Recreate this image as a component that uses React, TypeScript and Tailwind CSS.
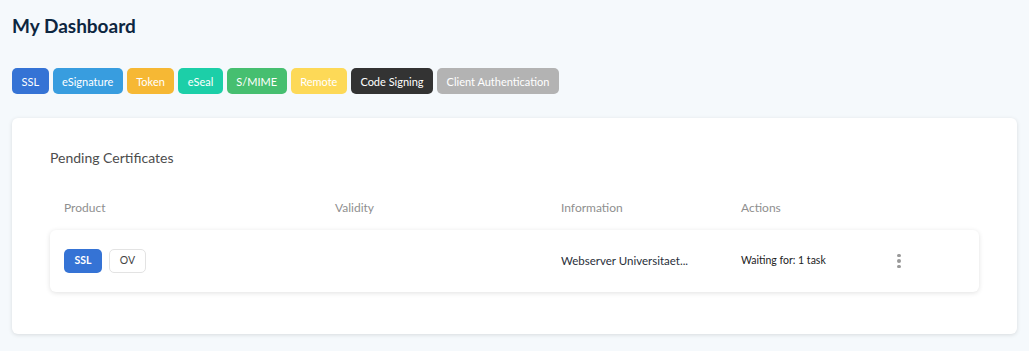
const TABS = [
  { label: 'SSL', cls: 'bg-[#3573d5] text-white' },
  { label: 'eSignature', cls: 'bg-[#389ddf] text-white' },
  { label: 'Token', cls: 'bg-[#f6b834] text-white' },
  { label: 'eSeal', cls: 'bg-[#1ccfa8] text-white' },
  { label: 'S/MIME', cls: 'bg-[#46bf70] text-white' },
  { label: 'Remote', cls: 'bg-[#fdd957] text-white' },
  { label: 'Code Signing', cls: 'bg-[#333333] text-white' },
  { label: 'Client Authentication', cls: 'bg-[#b3b3b3] text-white' },
];

const COLS = 'grid grid-cols-[271px_226px_180px_1fr] items-center';

export default function App() {
  return (
    <div className="min-h-[351px] bg-[#f5f9fc] px-3 pt-[12px] pb-[18px] font-['Lato','Noto_Sans',sans-serif]">
      <h1 className="text-[19px] font-bold leading-[28px] text-[#0d2640]">My Dashboard</h1>

      <div className="mt-[28px] flex gap-[4px]">
        {TABS.map(t => (
          <button
            key={t.label}
            className={`h-[26px] rounded-[5px] px-[9.5px] text-[11px] leading-none ${t.cls}`}
          >
            {t.label}
          </button>
        ))}
      </div>

      <div className="mt-[24px] rounded-[6px] bg-white px-[38px] pt-[31px] pb-[42px] shadow-[0_1px_4px_rgba(0,0,0,0.12)]">
        <h2 className="text-[14px] leading-[18px] text-[#4d4d4d]">Pending Certificates</h2>

        <div className={`${COLS} mt-[33px] px-[14px] pb-[14px] text-[12px] leading-[16px] text-[#8f8f8f]`}>
          <div>Product</div>
          <div>Validity</div>
          <div>Information</div>
          <div>Actions</div>
        </div>

        <div className={`${COLS} h-[62px] rounded-[6px] bg-white px-[14px] shadow-[0_1px_5px_rgba(0,0,0,0.12)]`}>
          <div className="flex gap-[7px]">
            <span className="flex h-[24px] w-[38px] items-center justify-center rounded-[5px] bg-[#3573d5] text-[10.5px] font-bold text-white">
              SSL
            </span>
            <span className="flex h-[24px] w-[37px] items-center justify-center rounded-[5px] border border-[#e3e3e3] text-[10.5px] text-[#444]">
              OV
            </span>
          </div>
          <div />
          <div className="text-[11.5px] text-[#2a2f3a]">Webserver Universitaet...</div>
          <div className="flex items-center">
            <span className="w-[156px] text-[10.5px] text-[#222]">Waiting for: 1 task</span>
            <span className="flex flex-col gap-[2px]">
              <span className="h-[3.5px] w-[3.5px] rounded-full bg-[#999]" />
              <span className="h-[3.5px] w-[3.5px] rounded-full bg-[#999]" />
              <span className="h-[3.5px] w-[3.5px] rounded-full bg-[#999]" />
            </span>
          </div>
        </div>
      </div>
    </div>
  );
}
